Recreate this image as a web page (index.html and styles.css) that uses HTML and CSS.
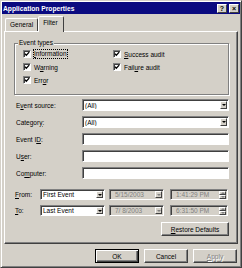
FILE: index.html
```html
<!DOCTYPE html>
<html lang="en">
<head>
    <meta charset="UTF-8">
    <title>Application Properties</title>
    <link rel="stylesheet" href="styles.css">
</head>
<body>
    <div class="window">
        <div class="titlebar">
            <span class="title">Application Properties</span>
            <span class="cap-btn">?</span>
            <span class="cap-btn">×</span>
        </div>

        <div class="tabs">
            <div class="tab">General</div>
            <div class="tab active">Filter</div>
        </div>

        <div class="panel">
            <fieldset class="group">
                <legend>Event types</legend>
                <div class="checks">
                    <label class="check"><span class="box"><svg width="6" height="6" viewBox="0 0 6 6"><polyline points="0.8,2.6 2.3,4.2 5.2,1.1" fill="none" stroke="#000" stroke-width="1.3"/></svg></span><span class="focus"><u>I</u>nformation</span></label>
                    <label class="check"><span class="box"><svg width="6" height="6" viewBox="0 0 6 6"><polyline points="0.8,2.6 2.3,4.2 5.2,1.1" fill="none" stroke="#000" stroke-width="1.3"/></svg></span><span><u>S</u>uccess audit</span></label>
                    <label class="check"><span class="box"><svg width="6" height="6" viewBox="0 0 6 6"><polyline points="0.8,2.6 2.3,4.2 5.2,1.1" fill="none" stroke="#000" stroke-width="1.3"/></svg></span><span>W<u>a</u>rning</span></label>
                    <label class="check"><span class="box"><svg width="6" height="6" viewBox="0 0 6 6"><polyline points="0.8,2.6 2.3,4.2 5.2,1.1" fill="none" stroke="#000" stroke-width="1.3"/></svg></span><span>Fail<u>u</u>re audit</span></label>
                    <label class="check"><span class="box"><svg width="6" height="6" viewBox="0 0 6 6"><polyline points="0.8,2.6 2.3,4.2 5.2,1.1" fill="none" stroke="#000" stroke-width="1.3"/></svg></span><span>Err<u>o</u>r</span></label>
                </div>
            </fieldset>

            <div class="fields">
                <div class="row">
                    <span class="label">E<u>v</u>ent source:</span>
                    <div class="field"><span class="value">(All)</span><span class="drop"><i class="arrow"></i></span></div>
                </div>
                <div class="row">
                    <span class="label">Categor<u>y</u>:</span>
                    <div class="field"><span class="value">(All)</span><span class="drop"><i class="arrow"></i></span></div>
                </div>
                <div class="row">
                    <span class="label">Event I<u>D</u>:</span>
                    <div class="field"></div>
                </div>
                <div class="row">
                    <span class="label">U<u>s</u>er:</span>
                    <div class="field"></div>
                </div>
                <div class="row">
                    <span class="label">Co<u>m</u>puter:</span>
                    <div class="field"></div>
                </div>
            </div>

            <div class="range">
                <div class="row">
                    <span class="label"><u>F</u>rom:</span>
                    <div class="field combo"><span class="value">First Event</span><span class="drop"><i class="arrow"></i></span></div>
                    <div class="field date off"><span class="value">5/15/2003</span><span class="drop"><i class="arrow"></i></span></div>
                    <div class="field time off"><span class="value">1:41:29 PM</span><span class="spin"><span class="half"><i class="arrow up"></i></span><span class="half"><i class="arrow"></i></span></span></div>
                </div>
                <div class="row">
                    <span class="label"><u>T</u>o:</span>
                    <div class="field combo"><span class="value">Last Event</span><span class="drop"><i class="arrow"></i></span></div>
                    <div class="field date off"><span class="value">7/ 8/2003</span><span class="drop"><i class="arrow"></i></span></div>
                    <div class="field time off"><span class="value">6:31:50 PM</span><span class="spin"><span class="half"><i class="arrow up"></i></span><span class="half"><i class="arrow"></i></span></span></div>
                </div>
            </div>

            <div class="restore">
                <span class="btn wide"><u>R</u>estore Defaults</span>
            </div>
        </div>

        <div class="buttons">
            <span class="btn default">OK</span>
            <span class="btn">Cancel</span>
            <span class="btn disabled"><u>A</u>pply</span>
        </div>
    </div>
</body>
</html>
```

FILE: styles.css
```css
/* Common */
body {
    margin: 0;
    font-family: 'Liberation Sans', Arial, sans-serif;
    font-size: 6.5px;
    color: #000;
    background: #d4d0c8;
}

u {
    text-underline-offset: 1px;
}

/* Window frame */
.window {
    width: 242px;
    height: 268px;
    box-sizing: border-box;
    background: #d4d0c8;
    border: 1px solid;
    border-color: #d4d0c8 #404040 #404040 #d4d0c8;
    box-shadow: inset 1px 1px #fff, inset -1px -1px #808080;
    padding: 1px;
    display: flex;
    flex-direction: column;
}

.titlebar {
    height: 12px;
    background: #0a0a80;
    color: #fff;
    display: flex;
    align-items: center;
    gap: 2px;
    padding: 0 1px 0 1px;
}

.title {
    flex: 1;
    font-weight: bold;
    font-size: 6.7px;
}

.cap-btn {
    width: 8px;
    height: 7px;
    background: #d4d0c8;
    color: #000;
    border: 1px solid;
    border-color: #fff #404040 #404040 #fff;
    font-size: 7px;
    font-weight: bold;
    line-height: 7px;
    text-align: center;
}

/* Tabs */
.tabs {
    height: 17px;
    display: flex;
    align-items: flex-end;
    padding-left: 3px;
}

.tab {
    height: 12px;
    line-height: 12px;
    padding: 0 4px 0 4px;
    border: 1px solid;
    border-bottom: none;
    border-color: #fff #404040 transparent #fff;
    border-radius: 2px 2px 0 0;
}

.tab.active {
    height: 15px;
    line-height: 12px;
    padding: 0 5px 0 4px;
    margin-bottom: -1px;
    background: #d4d0c8;
    position: relative;
    z-index: 1;
}

/* Tab page */
.panel {
    height: 213px;
    box-sizing: border-box;
    margin: 0 2px 0 2px;
    border: 1px solid;
    border-color: #fff #404040 #404040 #fff;
    box-shadow: inset -1px -1px #808080;
    padding: 0 8px 0 9px;
}

.group {
    margin: 7px 0 0;
    padding: 3px 0 10px 8px;
    min-width: 0;
    border: 1px solid #808080;
    box-shadow: inset 1px 1px #fff, 1px 1px #fff;
}

.group legend {
    margin-left: -5px;
    padding: 0 1px;
    line-height: 8px;
    background: #d4d0c8;
}

.checks {
    display: grid;
    grid-template-columns: 90px auto;
    grid-auto-rows: 8px;
    row-gap: 5px;
}

.check {
    display: flex;
    align-items: center;
    gap: 3px;
}

.box {
    width: 6px;
    height: 6px;
    background: #fff;
    border: 1px solid;
    border-color: #808080 #fff #fff #808080;
    box-shadow: inset 1px 1px #404040;
    display: flex;
}

.focus {
    outline: 1px dotted #000;
    outline-offset: 0;
    line-height: 8px;
}

/* Text fields */
.fields {
    margin-top: 4px;
    display: flex;
    flex-direction: column;
    gap: 5px;
}

.row {
    height: 12px;
    display: flex;
    align-items: center;
}

.label {
    width: 68px;
    padding-left: 2px;
    box-sizing: border-box;
    flex: none;
}

.field {
    flex: 1;
    height: 100%;
    box-sizing: border-box;
    background: #fff;
    border: 1px solid;
    border-color: #808080 #fff #fff #808080;
    box-shadow: inset 1px 1px #404040;
    padding: 1px;
    display: flex;
    align-items: stretch;
}

.value {
    flex: 1;
    padding-left: 1px;
    display: flex;
    align-items: center;
    white-space: nowrap;
    overflow: hidden;
}

.drop {
    width: 7px;
    box-sizing: border-box;
    background: #d4d0c8;
    border: 1px solid;
    border-color: #fff #404040 #404040 #fff;
    display: flex;
    align-items: center;
    justify-content: center;
}

.arrow {
    width: 0;
    height: 0;
    border-left: 2px solid transparent;
    border-right: 2px solid transparent;
    border-top: 2px solid #000;
}

.arrow.up {
    border-top: none;
    border-bottom: 2px solid #000;
}

/* Date range */
.range {
    margin-top: 10px;
    display: flex;
    flex-direction: column;
    gap: 5px;
}

.range .row {
    height: 11px;
}

.range .label {
    width: 26px;
    padding-left: 1px;
}

.range .combo {
    flex: none;
    width: 65px;
}

.range .date {
    flex: none;
    width: 55px;
    margin-left: 4px;
}

.range .time {
    flex: none;
    width: 58px;
    margin-left: 6px;
}

.off {
    background: #d4d0c8;
    color: #808080;
}

.off .value {
    padding-left: 4px;
}

.off .arrow {
    border-top-color: #808080;
}

.off .arrow.up {
    border-bottom-color: #808080;
}

.spin {
    width: 7px;
    display: flex;
    flex-direction: column;
}

.half {
    flex: 1;
    box-sizing: border-box;
    border: 1px solid;
    border-color: #fff #404040 #404040 #fff;
    display: flex;
    align-items: center;
    justify-content: center;
}

/* Buttons */
.restore {
    margin-top: 6px;
    display: flex;
    justify-content: flex-end;
}

.btn {
    width: 44px;
    height: 14px;
    box-sizing: border-box;
    border: 1px solid;
    border-color: #fff #404040 #404040 #fff;
    box-shadow: inset -1px -1px #808080;
    display: flex;
    align-items: center;
    justify-content: center;
}

.btn.wide {
    width: 68px;
}

.btn.default {
    border-color: #000;
    box-shadow: inset 1px 1px #fff, inset -1px -1px #404040, inset -2px -2px #808080;
}

.btn.disabled {
    color: #808080;
    text-shadow: 1px 1px #fff;
}

.buttons {
    margin-top: 5px;
    display: flex;
    justify-content: flex-end;
    gap: 5px;
    padding-right: 3px;
}
```
